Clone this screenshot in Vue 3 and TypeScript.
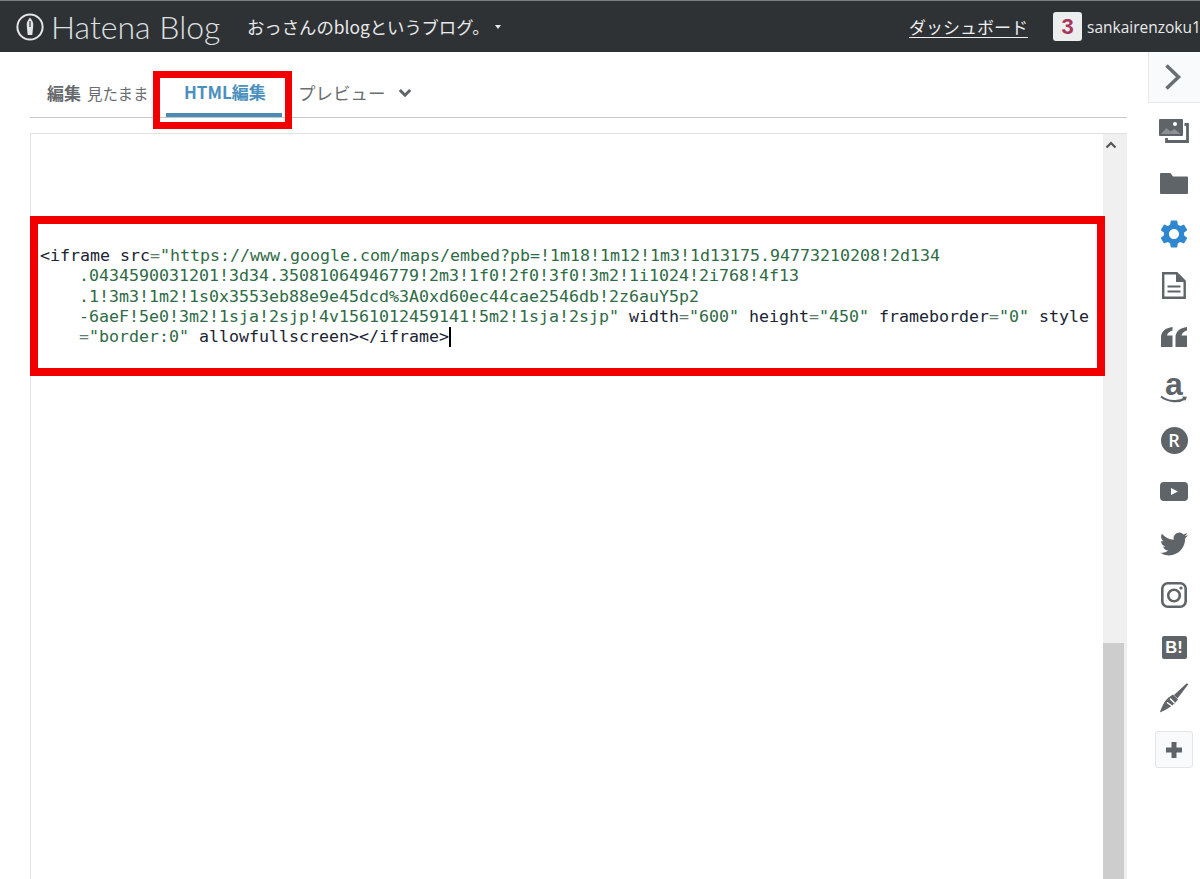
<script setup lang="ts">
const title: string = 'おっさんのblogというブログ。'
</script>

<template>
  <div class="page">
    <header class="topbar">
      <div class="brand">
        <svg class="logo" viewBox="0 0 30 30">
          <circle cx="15" cy="15" r="12.6" fill="none" stroke="#e4e5e6" stroke-width="2" />
          <path d="M15 5.500c2.600 3 3.600 5.600 3.200 8.500l-.9 9h-4.600l-.9-9c-.4-2.900.6-5.500 3.200-8.500z" fill="#e4e5e6" />
          <path d="M15 9v6" stroke="#2f3235" stroke-width="1.200" />
        </svg>
        <span class="wordmark">Hatena Blog</span>
      </div>
      <span class="blogtitle">{{ title }}</span>
      <span class="caret"></span>
      <a class="dash">ダッシュボード</a>
      <span class="badge">3</span>
      <span class="user">sankairenzoku1</span>
    </header>

    <div class="body">
      <main class="main">
        <nav class="tabs">
          <div class="tab tab-edit"><b>編集</b> <span>見たまま</span></div>
          <div class="tab tab-html">HTML編集</div>
          <div class="tab tab-preview">プレビュー
            <svg class="chev" viewBox="0 0 14 10"><path d="M1.800 2 7 7.200 12.200 2" fill="none" stroke="#5f6468" stroke-width="3" /></svg>
          </div>
          <div class="mark mark-tab"></div>
        </nav>

        <section class="editor">
          <div class="code">
            <div class="ln first"><i>&lt;iframe</i> <i>src</i><u>=</u><em>"https://www.google.com/maps/embed?pb=!1m18!1m12!1m3!1d13175.94773210208!2d134</em></div>
            <div class="ln"><em>.0434590031201!3d34.35081064946779!2m3!1f0!2f0!3f0!3m2!1i1024!2i768!4f13</em></div>
            <div class="ln"><em>.1!3m3!1m2!1s0x3553eb88e9e45dcd%3A0xd60ec44cae2546db!2z6auY5p2</em></div>
            <div class="ln"><em>-6aeF!5e0!3m2!1sja!2sjp!4v1561012459141!5m2!1sja!2sjp"</em> <i>width</i><u>=</u><em>"600"</em> <i>height</i><u>=</u><em>"450"</em> <i>frameborder</i><u>=</u><em>"0"</em> <i>style</i></div>
            <div class="ln"><u>=</u><em>"border:0"</em> <i>allowfullscreen</i><i>&gt;&lt;/iframe&gt;</i><span class="cursor"></span></div>
          </div>
          <div class="scroll">
            <svg class="up" viewBox="0 0 12 8"><path d="M1.500 6.500 6 2l4.500 4.500" fill="none" stroke="#555" stroke-width="2.200" /></svg>
            <div class="thumb"></div>
          </div>
          <div class="mark mark-code"></div>
        </section>
      </main>

      <aside class="side">
        <div class="toggle">
          <svg viewBox="0 0 20 28" width="20" height="28"><path d="M3.500 2.500 15.500 14 3.500 25.500" fill="none" stroke="#6a6f73" stroke-width="3.600" /></svg>
        </div>
        <ul class="tools">
          <li>
            <svg viewBox="0 0 30 24" width="30" height="24">
              <path d="M25.500 5.500h3v17H7.500v-3.500" fill="none" stroke="#5f6468" stroke-width="2.800" />
              <rect width="24" height="17" rx="1" fill="#5f6468" />
              <circle cx="16" cy="5" r="2" fill="#fff" />
              <path d="M2 15l5.500-6 4 3.500 4-2.500 6 5z" fill="#8c9093" />
            </svg>
          </li>
          <li><svg class="folder" viewBox="0 0 28 21" width="28" height="21"><path d="M0 1a1 1 0 0 1 1-1h9.500L13 3.500h14a1 1 0 0 1 1 1V20a1 1 0 0 1-1 1H1a1 1 0 0 1-1-1z" fill="#5f6468" /></svg></li>
          <li><svg viewBox="2 2 20 20" width="28" height="28"><path fill="#2f87d0" d="M19.140 12.940c.04-.3.06-.61.06-.94 0-.32-.02-.64-.07-.94l2.030-1.580a.49.49 0 0 0 .12-.61l-1.920-3.320a.488.488 0 0 0-.59-.22l-2.390.96c-.5-.38-1.030-.7-1.620-.94l-.36-2.540a.484.484 0 0 0-.48-.41h-3.840c-.24 0-.43.17-.47.41l-.36 2.540c-.59.24-1.130.57-1.620.94l-2.390-.96c-.22-.08-.47 0-.59.22L2.740 8.870c-.12.21-.08.47.12.61l2.030 1.580c-.05.3-.09.63-.09.94s.02.64.07.94l-2.030 1.580a.49.49 0 0 0-.12.61l1.920 3.320c.12.22.37.29.59.22l2.390-.96c.5.38 1.030.7 1.620.94l.36 2.540c.05.24.24.41.48.41h3.840c.24 0 .44-.17.47-.41l.36-2.540c.59-.24 1.130-.56 1.620-.94l2.390.96c.22.08.47 0 .59-.22l1.920-3.320c.12-.22.07-.47-.12-.61l-2.010-1.580zM12 15.600c-1.980 0-3.600-1.620-3.600-3.600s1.620-3.600 3.600-3.600 3.600 1.620 3.600 3.600-1.620 3.600-3.600 3.600z" /></svg></li>
          <li>
            <svg viewBox="0 0 24 27" width="24" height="27">
              <path d="M1.200 1.200h13.500l8 8v16.600H1.200z" fill="none" stroke="#5f6468" stroke-width="2.400" />
              <path d="M14 1.500v8.500h8.500z" fill="#5f6468" />
              <path d="M5.500 14.500h13M5.500 19.500h13" stroke="#5f6468" stroke-width="2.200" />
            </svg>
          </li>
          <li>
            <svg viewBox="0 0 26 20" width="26" height="20">
              <path d="M11.500 0v3.500C8.500 4.500 6.500 6 6 8.500h5.500V20H0V10.500C0 4.500 4.500.8 11.500 0zM26 0v3.500C23 4.500 21 6 20.500 8.500H26V20H14.500V10.500C14.500 4.500 19 .8 26 0z" fill="#5f6468" />
            </svg>
          </li>
          <li class="amazon">
            <span class="a">a</span>
            <svg viewBox="0 0 28 9" width="28" height="9"><path d="M1 1.500C8 7 19 7.500 25 3.500" fill="none" stroke="#5f6468" stroke-width="2.200" /><path d="M22 1.500l5 .2-1.800 4.300z" fill="#5f6468" /></svg>
          </li>
          <li><span class="round">R</span></li>
          <li><svg viewBox="0 0 28 19" width="28" height="19"><rect width="28" height="19" rx="4" fill="#5f6468" /><path d="M11 6l7 3.500-7 3.500z" fill="#fff" /></svg></li>
          <li><svg viewBox="0 0 24 24" width="28" height="28"><path fill="#5f6468" d="M23.953 4.570a10 10 0 0 1-2.825.775 4.958 4.958 0 0 0 2.163-2.723c-.951.555-2.005.959-3.127 1.184a4.920 4.920 0 0 0-8.384 4.482C7.690 8.095 4.067 6.130 1.640 3.162a4.822 4.822 0 0 0-.666 2.475c0 1.710.87 3.213 2.188 4.096a4.904 4.904 0 0 1-2.228-.616v.06a4.923 4.923 0 0 0 3.946 4.827 4.996 4.996 0 0 1-2.212.085 4.936 4.936 0 0 0 4.604 3.417 9.867 9.867 0 0 1-6.102 2.105c-.39 0-.779-.023-1.170-.067a13.995 13.995 0 0 0 7.557 2.209c9.053 0 13.998-7.496 13.998-13.985 0-.21 0-.42-.015-.63A9.935 9.935 0 0 0 24 4.590z" /></svg></li>
          <li>
            <svg viewBox="0 0 26 26" width="26" height="26">
              <rect x="1.300" y="1.300" width="23.400" height="23.400" rx="5.500" fill="none" stroke="#5f6468" stroke-width="2.600" />
              <circle cx="13" cy="13.500" r="5.800" fill="none" stroke="#5f6468" stroke-width="2.600" />
              <circle cx="20" cy="6" r="1.600" fill="#5f6468" />
            </svg>
          </li>
          <li><span class="hb">B!</span></li>
          <li>
            <svg viewBox="0 0 30 30" width="30" height="30">
              <path d="M29.500 1 27.500 .5 15 12l3.500 3.500z" fill="#5f6468" />
              <path d="M14 11.500 19 16.500l-3 3.500C12 24 7 27 .8 29.500 2.500 24 5 18.500 9.500 14.500z" fill="#5f6468" />
              <path d="M11 15.500 15.500 20M8 19.500l5 3.500" stroke="#fff" stroke-width="1.500" />
            </svg>
          </li>
          <li class="plusrow">
            <button class="plus" type="button">
              <svg viewBox="0 0 18 18" width="18" height="18"><path d="M9 1v16M1 9h16" stroke="#5f6468" stroke-width="5" /></svg>
            </button>
          </li>
        </ul>
      </aside>
    </div>
  </div>
</template>

<style>
html, body { margin: 0; background: #fff; }
</style>

<style scoped>
.page {
  width: 1200px;
  height: 879px;
  overflow: hidden;
  display: flex;
  flex-direction: column;
  font-family: "Noto Sans CJK JP", "Noto Sans", sans-serif;
  background: #fff;
}
.topbar {
  flex: none;
  height: 51px;
  border-top: 1px solid #7b7d7f;
  background: #2f3235;
  display: flex;
  align-items: center;
  color: #e8e9ea;
  white-space: nowrap;
  overflow: hidden;
}
.topbar > * { flex: none; }
.brand { display: flex; align-items: center; margin-left: 15px; width: 232px; }
.logo { width: 30px; height: 30px; flex: none; }
.wordmark {
  font-family: Lato, sans-serif;
  font-weight: 300;
  font-size: 32px;
  line-height: 40px;
  margin-left: 6px;
  color: #dfe0e1;
}
.blogtitle { font-size: 17.360px; color: #e8e9ea; width: 245px; }
.caret {
  width: 0;
  height: 0;
  margin-left: 3px;
  border-left: 3.500px solid transparent;
  border-right: 3.500px solid transparent;
  border-top: 4px solid #e8e9ea;
}
.dash {
  margin-left: 408px;
  font-size: 17px;
  text-decoration: underline;
  text-underline-offset: 3px;
  color: #eeeeee;
  width: 120px;
  white-space: nowrap;
}
.badge {
  margin-left: 24px;
  width: 29px;
  height: 29px;
  border-radius: 3px;
  background: #eceded;
  color: #a8345c;
  font-family: "Liberation Sans", sans-serif;
  font-size: 22px;
  font-weight: 700;
  line-height: 29px;
  text-align: center;
}
.user {
  margin-left: 5px;
  font-family: "Open Sans", sans-serif;
  font-size: 15.500px;
  color: #e8e9ea;
}
.body { flex: 1; display: flex; min-height: 0; }
.main {
  flex: 1;
  min-width: 0;
  padding: 0 21px 0 30px;
  display: flex;
  flex-direction: column;
}
.tabs {
  position: relative;
  flex: none;
  height: 65px;
  border-bottom: 1px solid #c8c8c8;
  display: flex;
  color: #6a6e71;
}
.tab { display: flex; align-items: center; white-space: nowrap; height: 65px; padding-top: 16px; box-sizing: border-box; flex: none; }
.tab-edit { width: 136px; padding-left: 17px; font-size: 15.500px; gap: 6px; }
.tab-edit b { font-size: 17px; font-weight: 700; color: #666a6d; }
.tab-edit span { color: #6a6e71; }
.tab-html {
  width: 116px;
  padding-left: 18px;
  font-size: 17px;
  font-weight: 700;
  color: #4a8fbd;
  border-bottom: 4px solid #4a8ab5;
  padding-top: 18px;
}
.tab-preview { margin-left: 16px; font-size: 17.500px; color: #6a6e71; }
.chev { width: 14px; height: 10px; margin-left: 12px; }
.mark { position: absolute; border-style: solid; border-color: #f20000; box-sizing: border-box; pointer-events: none; }
.mark-tab { left: 123px; top: 19px; width: 139px; height: 58px; border-width: 7px; }
.editor {
  position: relative;
  margin-top: 15px;
  flex: 1;
  min-height: 0;
  display: flex;
  border-top: 1px solid #e2e2e2;
  border-left: 1px solid #e2e2e2;
}
.code {
  flex: 1;
  min-width: 0;
  padding: 112px 0 0 9px;
  font-family: "DejaVu Sans Mono", "Liberation Mono", monospace;
  font-size: 16.630px;
  line-height: 20.250px;
  white-space: pre;
  color: #1c2a3a;
}
.ln { padding-left: 39px; height: 20.250px; }
.ln.first { padding-left: 0; }
.code i { font-style: normal; color: #1a2433; }
.code em { font-style: normal; color: #2f6b45; }
.code u { text-decoration: none; color: #5f7f6d; }
.cursor {
  display: inline-block;
  width: 2px;
  height: 20px;
  background: #000;
  vertical-align: -5px;
}
.scroll {
  position: relative;
  flex: none;
  width: 24px;
  background: #f0f0f0;
}
.up { position: absolute; left: 2px; top: 7px; width: 12px; height: 8px; }
.thumb {
  position: absolute;
  left: 0;
  right: 3px;
  top: 509px;
  bottom: 0;
  background: #cdcdcd;
}
.mark-code { left: -1px; top: 82px; width: 1075px; height: 160px; border-width: 8px; }
.side { flex: none; width: 52px; }
.toggle {
  height: 51px;
  box-sizing: border-box;
  border-left: 1px solid #e6e9eb;
  border-bottom: 1px solid #e6e9eb;
  background: #f8fafb;
  display: flex;
  align-items: center;
  justify-content: center;
  padding-right: 3px;
}
.tools { list-style: none; margin: 2px 0 0; padding: 0; }
.tools li {
  height: 51.600px;
  display: flex;
  align-items: center;
  justify-content: center;
}
.folder { margin-top: 3px; }
.tools .amazon { flex-direction: column; }
.a {
  font-family: "Liberation Sans", sans-serif;
  font-size: 32px;
  font-weight: 700;
  line-height: 22px;
  color: #5f6468;
}
.round {
  width: 27px;
  height: 27px;
  border-radius: 50%;
  background: #5f6468;
  color: #fff;
  font-family: "Open Sans", sans-serif;
  font-size: 18px;
  font-weight: 600;
  line-height: 27px;
  text-align: center;
}
.hb {
  width: 25px;
  height: 23px;
  border-radius: 2px;
  background: #5f6468;
  color: #fff;
  font-family: "Liberation Sans", sans-serif;
  font-size: 16.500px;
  font-weight: 700;
  line-height: 23px;
  text-align: center;
  margin-top: 2px;
}
.plus {
  width: 38px;
  height: 37px;
  padding: 0;
  border: 1px solid #e3e5e7;
  border-radius: 3px;
  background: #f8fafb;
  display: flex;
  align-items: center;
  justify-content: center;
}
</style>
